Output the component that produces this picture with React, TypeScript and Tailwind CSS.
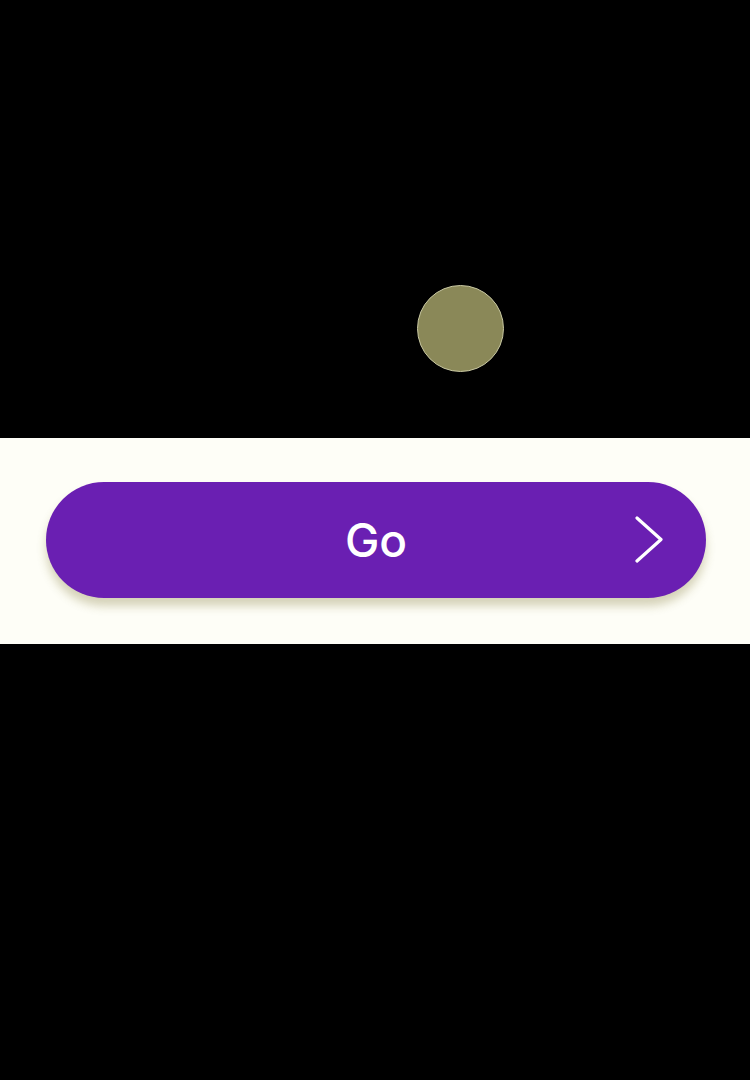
export default function App() {
  return (
    <div className="flex h-[1080px] w-[750px] flex-col bg-black font-['Liberation_Sans',Arial,sans-serif]">
      <div className="h-[438px] pl-[417px] pt-[285px]">
        <div className="h-[87px] w-[87px] rounded-full border border-[#c9c8a2] bg-[#8a8858]" />
      </div>
      <div className="h-[206px] bg-[#fefef7] pl-[46px] pr-[44px] pt-[44px]">
        <button className="relative flex h-[116px] w-full items-center justify-center rounded-full bg-[#6a1fb2] shadow-[0_8px_10px_rgba(120,110,40,0.3)]">
          <span className="font-['Inter',sans-serif] text-[46px] font-medium leading-none text-white">Go</span>
          <svg
            className="absolute right-[43px] top-[34px]"
            width="28"
            height="47"
            viewBox="0 0 28 47"
            fill="none"
            stroke="white"
            strokeWidth="3.2"
            strokeLinecap="round"
            strokeLinejoin="round"
          >
            <path d="M2 2 L26 23.5 L2 45" />
          </svg>
        </button>
      </div>
    </div>
  )
}
